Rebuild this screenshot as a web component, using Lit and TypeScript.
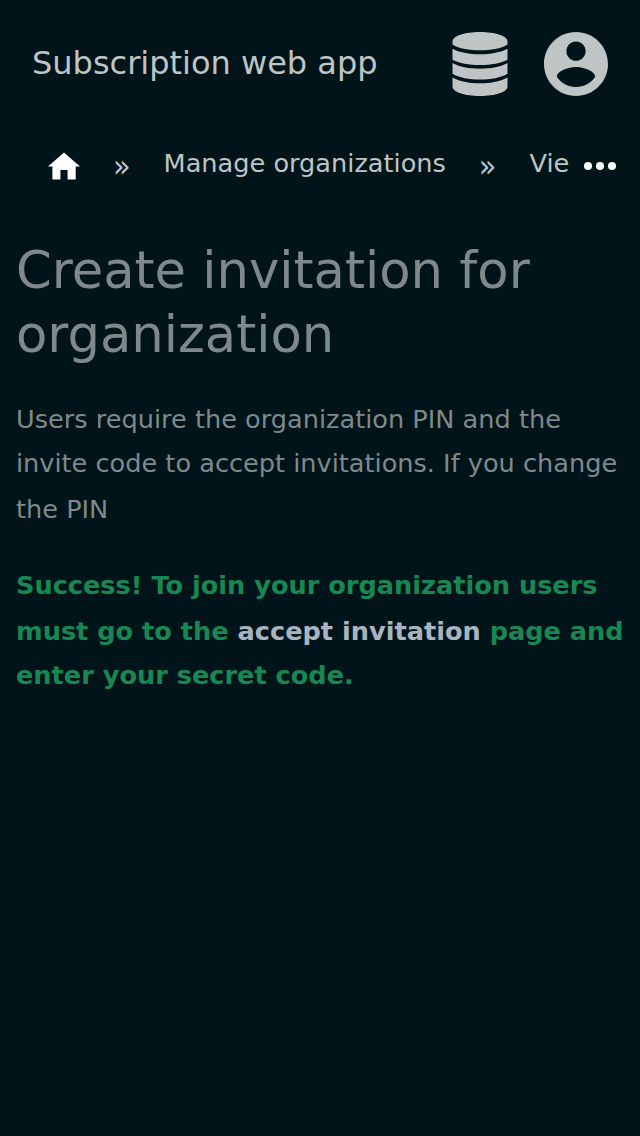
import { LitElement, html, css } from "lit";
import { customElement } from "lit/decorators.js";

@customElement("app-root")
export class AppRoot extends LitElement {
  static styles = css`
    :host {
      display: block;
      min-height: 1136px;
      box-sizing: border-box;
      background: #001419;
      color: #7f898c;
      font-family: "DejaVu Sans", sans-serif;
      overflow: hidden;
    }
    header {
      display: flex;
      align-items: center;
      height: 128px;
      padding: 0 32px;
      box-sizing: border-box;
      color: #bfc4c5;
    }
    .brand {
      flex: 1;
      font-size: 32px;
      line-height: 48px;
      padding-bottom: 2px;
      white-space: nowrap;
    }
    .icon { display: block; flex: none; }
    .database { margin-right: 36px; }
    nav {
      display: flex;
      align-items: center;
      height: 72px;
      padding-left: 48px;
      color: #bfc4c5;
      font-size: 25.6px;
      line-height: 38px;
      white-space: nowrap;
    }
    .home { color: #fff; margin-top: 4px; }
    .crumb { padding-bottom: 2px; }
    .sep {
      width: 83.6px;
      text-align: center;
      font-family: "DejaVu Sans Condensed", "DejaVu Sans", sans-serif;
      font-stretch: 90%;
      font-size: 32px;
      padding-top: 3px;
    }
    .clip { width: 40.8px; overflow: hidden; }
    .more { color: #fff; margin: 4px 0 0 14px; }
    main { padding: 38px 16px 0; }
    h1 {
      margin: 0;
      font-size: 51.2px;
      line-height: 64px;
      font-weight: 400;
    }
    p {
      margin: 0;
      font-size: 25.6px;
      line-height: 45px;
      white-space: nowrap;
    }
    .line { display: block; }
    .raised { margin: -1px 0 1px; }
    .lowered { margin: 1px 0 -1px; }
    .hint { margin-top: 31px; }
    .success { margin-top: 31px; font-weight: 700; color: #198754; }
    .success a { color: #aab4c0; }
  `;

  render() {
    return html`
      <header>
        <div class="brand">Subscription web app</div>
        <svg class="icon database" width="56" height="64" viewBox="0 0 56 64" fill="currentColor">
          <path d="M.5 9.500C.5 4 13 0 28 0s27.500 4 27.500 9.500V12.500C49 16.600 39 18.300 28 18.300S7 16.600.5 12.500z"/>
          <path d="M.5 16.700C7 20.300 17 22.200 28 22.200s21-1.900 27.500-5.500v11C49 31.200 39 33 28 33S7 31.200.5 27.700z"/>
          <path d="M.5 31.100C7 34.900 17 36.800 28 36.800s21-1.900 27.500-5.700V41.700C49 45.700 39 47.500 28 47.500S7 45.700.5 41.700z"/>
          <path d="M.5 45.500C7 49.400 17 51.300 28 51.300s21-1.900 27.500-5.800v9C55.500 60 43 64 28 64S.5 60 .5 54.500z"/>
        </svg>
        <svg class="icon" width="64" height="64" viewBox="2 2 20 20" fill="currentColor">
          <path d="M12 2C6.480 2 2 6.480 2 12s4.480 10 10 10 10-4.480 10-10S17.520 2 12 2zm0 3c1.660 0 3 1.340 3 3s-1.340 3-3 3-3-1.340-3-3 1.340-3 3-3zm0 14.200c-2.500 0-4.710-1.280-6-3.220.03-1.990 4-3.080 6-3.080 1.990 0 5.970 1.090 6 3.080-1.290 1.940-3.500 3.220-6 3.220z"/>
        </svg>
      </header>
      <nav>
        <svg class="icon home" width="32" height="28" viewBox="0 0 32 28" fill="currentColor">
          <path d="M16 .4L32 14.500H27.700V27.600H19.600V18H12.400V27.600H4.400V14.500H0z"/>
        </svg>
        <span class="sep">»</span>
        <span class="crumb">Manage organizations</span>
        <span class="sep">»</span>
        <span class="crumb clip">Vie</span>
        <svg class="icon more" width="32" height="8" viewBox="0 0 32 8" fill="currentColor">
          <circle cx="4" cy="4" r="4"/><circle cx="16" cy="4" r="4"/><circle cx="28" cy="4" r="4"/>
        </svg>
      </nav>
      <main>
        <h1>Create invitation for<br>organization</h1>
        <p class="hint">
          <span class="line">Users require the organization PIN and the</span>
          <span class="line raised">invite code to accept invitations. If you change</span>
          <span class="line">the PIN</span>
        </p>
        <p class="success">
          <span class="line">Success! To join your organization users</span>
          <span class="line lowered">must go to the <a>accept invitation</a> page and</span>
          <span class="line">enter your secret code.</span>
        </p>
      </main>
    `;
  }
}
